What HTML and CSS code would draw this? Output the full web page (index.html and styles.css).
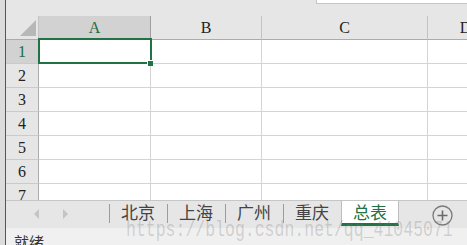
FILE: index.html
```html
<!DOCTYPE html>
<html lang="zh-CN">
<head>
<meta charset="utf-8">
<title>Excel</title>
<link rel="stylesheet" href="styles.css">
</head>
<body>
<div class="app">
  <div class="edge"></div>
  <div class="main">
    <div class="topbar"><div class="fx"></div></div>
    <div class="sheet">
      <div class="corner"><svg class="tri" width="16" height="16" viewBox="0 0 16 16"><polygon points="16,0 16,16 0,16" fill="#b7b7b7"/></svg></div>
      <div class="ch sel">A</div><div class="ch">B</div><div class="ch">C</div><div class="ch">D</div>

      <div class="rh sel">1</div><div class="cell a1"><div class="selection"><span class="handle"></span></div></div><div class="cell"></div><div class="cell"></div><div class="cell"></div>
      <div class="rh">2</div><div class="cell"></div><div class="cell"></div><div class="cell"></div><div class="cell"></div>
      <div class="rh">3</div><div class="cell"></div><div class="cell"></div><div class="cell"></div><div class="cell"></div>
      <div class="rh">4</div><div class="cell"></div><div class="cell"></div><div class="cell"></div><div class="cell"></div>
      <div class="rh">5</div><div class="cell"></div><div class="cell"></div><div class="cell"></div><div class="cell"></div>
      <div class="rh">6</div><div class="cell"></div><div class="cell"></div><div class="cell"></div><div class="cell"></div>
      <div class="rh">7</div><div class="cell"></div><div class="cell"></div><div class="cell"></div><div class="cell"></div>
    </div>
    <div class="tabbar">
      <svg class="nav" width="103" height="27" viewBox="0 0 103 27">
        <polygon points="33,8 33,18 28,13" fill="#c4c4c4"/>
        <polygon points="57,8 57,18 62,13" fill="#c4c4c4"/>
      </svg>
      <span class="sep"></span><div class="tab">北京</div>
      <span class="sep"></span><div class="tab">上海</div>
      <span class="sep"></span><div class="tab">广州</div>
      <span class="sep"></span><div class="tab">重庆</div>
      <div class="tab active">总表</div>
      <svg class="add" width="21" height="21" viewBox="0 0 21 21">
        <circle cx="10.5" cy="10.5" r="9.5" fill="none" stroke="#7a7a7a" stroke-width="1.3"/>
        <path d="M5.5 10.5H15.5M10.5 5.5V15.5" stroke="#6a6a6a" stroke-width="1.6"/>
      </svg>
    </div>
    <div class="status">就绪</div>
  </div>
  <div class="watermark">https://blog.csdn.net/qq_41045071</div>
</div>
</body>
</html>
```
FILE: styles.css
```css
body {
  margin: 0;
  width: 467px;
  height: 245px;
  overflow: hidden;
  background: #e6e6e6;
  font-family: "Noto Sans CJK SC", "Noto Sans", sans-serif;
}

.app {
  position: relative;
  display: flex;
  width: 467px;
  height: 245px;
  overflow: hidden;
}

.edge {
  flex: none;
  width: 5px;
  background: #dcdcdc;
  border-right: 1px solid #217346;
}

.main {
  flex: 1;
  min-width: 0;
  display: flex;
  flex-direction: column;
}

.topbar {
  flex: none;
  height: 16px;
  display: flex;
  justify-content: flex-end;
  background: #e6e6e6;
}

.fx {
  width: 151px;
  height: 4px;
  box-sizing: border-box;
  background: #fff;
  border-left: 1px solid #c6c6c6;
  border-bottom: 1px solid #c6c6c6;
}

.sheet {
  flex: none;
  height: 184px;
  overflow: hidden;
  display: grid;
  grid-template-columns: 33px 112px 111px 166px 76px;
  grid-auto-rows: 24px;
  background: #fff;
  font-family: "Liberation Serif", serif;
  font-size: 16px;
}

.sheet > div {
  box-sizing: border-box;
}

.corner {
  background: #e6e6e6;
  border-right: 1px solid #c3c3c3;
  border-bottom: 1px solid #ababab;
  display: flex;
  align-items: flex-end;
  justify-content: flex-end;
  padding: 0 2px 3px 0;
}

.tri {
  display: block;
}

.ch {
  background: #e6e6e6;
  border-right: 1px solid #c3c3c3;
  border-bottom: 1px solid #ababab;
  display: flex;
  align-items: center;
  justify-content: center;
  color: #222;
  line-height: 1;
  padding-top: 1px;
}

.ch.sel {
  background: #d2d2d2;
  color: #1e6b41;
  border-right-color: #9e9e9e;
  border-bottom-color: #217346;
}

.rh {
  background: #e6e6e6;
  border-right: 1px solid #ababab;
  border-bottom: 1px solid #cacaca;
  display: flex;
  align-items: center;
  justify-content: center;
  color: #222;
  line-height: 1;
}

.rh.sel {
  background: #d2d2d2;
  color: #1e6b41;
}

.cell {
  border-right: 1px solid #d4d4d4;
  border-bottom: 1px solid #d4d4d4;
}

.cell.a1 {
  position: relative;
}

.selection {
  position: absolute;
  left: -1px;
  top: -2px;
  width: 114px;
  height: 26px;
  box-sizing: border-box;
  border: 2px solid #217346;
}

.handle {
  position: absolute;
  left: 107px;
  top: 20px;
  width: 6px;
  height: 6px;
  box-sizing: border-box;
  background: #217346;
  border-left: 1px solid #fff;
  border-top: 1px solid #fff;
}

.tabbar {
  flex: none;
  height: 28px;
  box-sizing: border-box;
  border-top: 1px solid #c6c6c6;
  background: #e6e6e6;
  display: flex;
  align-items: flex-start;
}

.nav {
  flex: none;
  display: block;
}

.sep {
  flex: none;
  width: 1px;
  height: 19px;
  margin-top: 3px;
  background: #9c9c9c;
}

.tab {
  flex: none;
  height: 22px;
  line-height: 16px;
  padding: 3px 12px 0 11px;
  box-sizing: border-box;
  font-size: 17px;
  color: #444;
}

.tab.active {
  height: 25px;
  padding: 3px 11px 0 11px;
  background: #fff;
  border-left: 1px solid #bdbdbd;
  border-right: 1px solid #bdbdbd;
  border-bottom: 3px solid #217346;
  color: #217346;
}

.add {
  flex: none;
  display: block;
  margin: 4px 14px 0 auto;
}

.status {
  flex: 1;
  background: #f0f0f0;
  font-size: 15px;
  line-height: 17px;
  padding: 5px 0 0 8px;
  color: #333;
}

.watermark {
  position: absolute;
  left: 126px;
  top: 222px;
  font-family: "Liberation Mono", monospace;
  font-size: 16.5px;
  line-height: 20px;
  white-space: nowrap;
  color: rgba(120, 120, 120, 0.28);
  transform: scaleY(1.3);
  transform-origin: 0 14px;
  pointer-events: none;
}
```
